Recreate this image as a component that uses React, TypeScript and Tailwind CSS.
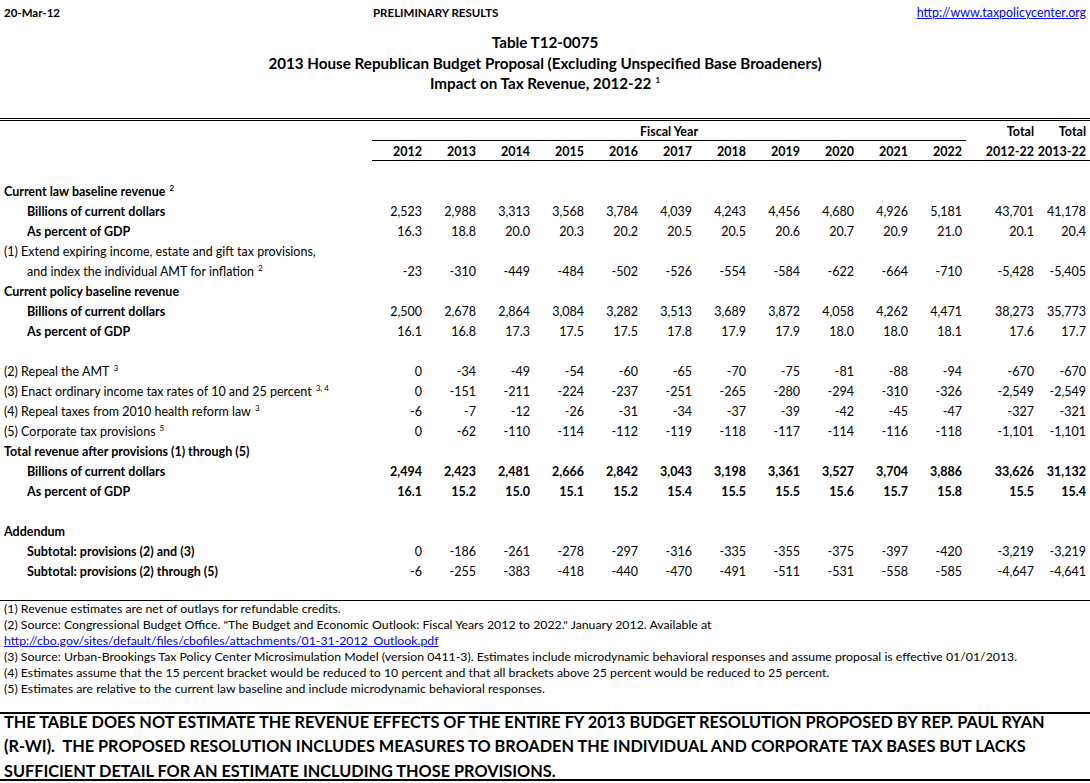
import type { ReactNode } from 'react';

const YEARS = ['2012', '2013', '2014', '2015', '2016', '2017', '2018', '2019', '2020', '2021', '2022'];

type DataRow = {
  label: string;
  sup?: string;
  indent?: boolean;
  bold?: boolean;
  boldValues?: boolean;
  values?: string[];
};

type Row = DataRow | 'gap';

const ROWS: Row[] = [
  { label: 'Current law baseline revenue', sup: '2', bold: true },
  {
    label: 'Billions of current dollars',
    indent: true,
    bold: true,
    values: ['2,523', '2,988', '3,313', '3,568', '3,784', '4,039', '4,243', '4,456', '4,680', '4,926', '5,181', '43,701', '41,178'],
  },
  {
    label: 'As percent of GDP',
    indent: true,
    bold: true,
    values: ['16.3', '18.8', '20.0', '20.3', '20.2', '20.5', '20.5', '20.6', '20.7', '20.9', '21.0', '20.1', '20.4'],
  },
  { label: '(1) Extend expiring income, estate and gift tax provisions,' },
  {
    label: 'and index the individual AMT for inflation',
    sup: '2',
    indent: true,
    values: ['-23', '-310', '-449', '-484', '-502', '-526', '-554', '-584', '-622', '-664', '-710', '-5,428', '-5,405'],
  },
  { label: 'Current policy baseline revenue', bold: true },
  {
    label: 'Billions of current dollars',
    indent: true,
    bold: true,
    values: ['2,500', '2,678', '2,864', '3,084', '3,282', '3,513', '3,689', '3,872', '4,058', '4,262', '4,471', '38,273', '35,773'],
  },
  {
    label: 'As percent of GDP',
    indent: true,
    bold: true,
    values: ['16.1', '16.8', '17.3', '17.5', '17.5', '17.8', '17.9', '17.9', '18.0', '18.0', '18.1', '17.6', '17.7'],
  },
  'gap',
  {
    label: '(2) Repeal the AMT',
    sup: '3',
    values: ['0', '-34', '-49', '-54', '-60', '-65', '-70', '-75', '-81', '-88', '-94', '-670', '-670'],
  },
  {
    label: '(3) Enact ordinary income tax rates of 10 and 25 percent',
    sup: '3, 4',
    values: ['0', '-151', '-211', '-224', '-237', '-251', '-265', '-280', '-294', '-310', '-326', '-2,549', '-2,549'],
  },
  {
    label: '(4) Repeal taxes from 2010 health reform law',
    sup: '3',
    values: ['-6', '-7', '-12', '-26', '-31', '-34', '-37', '-39', '-42', '-45', '-47', '-327', '-321'],
  },
  {
    label: '(5) Corporate tax provisions',
    sup: '5',
    values: ['0', '-62', '-110', '-114', '-112', '-119', '-118', '-117', '-114', '-116', '-118', '-1,101', '-1,101'],
  },
  { label: 'Total revenue after provisions (1) through (5)', bold: true },
  {
    label: 'Billions of current dollars',
    indent: true,
    bold: true,
    boldValues: true,
    values: ['2,494', '2,423', '2,481', '2,666', '2,842', '3,043', '3,198', '3,361', '3,527', '3,704', '3,886', '33,626', '31,132'],
  },
  {
    label: 'As percent of GDP',
    indent: true,
    bold: true,
    boldValues: true,
    values: ['16.1', '15.2', '15.0', '15.1', '15.2', '15.4', '15.5', '15.5', '15.6', '15.7', '15.8', '15.5', '15.4'],
  },
  'gap',
  { label: 'Addendum', bold: true },
  {
    label: 'Subtotal: provisions (2) and (3)',
    indent: true,
    bold: true,
    values: ['0', '-186', '-261', '-278', '-297', '-316', '-335', '-355', '-375', '-397', '-420', '-3,219', '-3,219'],
  },
  {
    label: 'Subtotal: provisions (2) through (5)',
    indent: true,
    bold: true,
    values: ['-6', '-255', '-383', '-418', '-440', '-470', '-491', '-511', '-531', '-558', '-585', '-4,647', '-4,641'],
  },
];

const GRID = 'grid grid-cols-[372px_repeat(11,54px)_72px_52px]';

function Sup({ children }: { children: ReactNode }) {
  return <span className="ml-[4px] align-super text-[8px] leading-none">{children}</span>;
}

function TableRow({ row }: { row: DataRow }) {
  return (
    <div className={`${GRID} h-[20px] items-center`}>
      <div className={`whitespace-nowrap ${row.indent ? 'pl-[27px]' : 'pl-[4px]'} ${row.bold ? 'font-bold' : ''}`}>
        {row.label}
        {row.sup && <Sup>{row.sup}</Sup>}
      </div>
      {row.values?.map((v, i) => (
        <div key={i} className={`flex justify-end whitespace-nowrap pr-[4px] tabular-nums ${row.boldValues ? 'font-bold' : ''}`}>
          {v}
        </div>
      ))}
    </div>
  );
}

const FOOTNOTES = [
  '(1) Revenue estimates are net of outlays for refundable credits.',
  '(2) Source: Congressional Budget Office. "The Budget and Economic Outlook: Fiscal Years 2012 to 2022." January 2012. Available at',
  null,
  '(3) Source: Urban-Brookings Tax Policy Center Microsimulation Model (version 0411-3). Estimates include microdynamic behavioral responses and assume proposal is effective 01/01/2013.',
  '(4) Estimates assume that the 15 percent bracket would be reduced to 10 percent and that all brackets above 25 percent would be reduced to 25 percent.',
  '(5) Estimates are relative to the current law baseline and include microdynamic behavioral responses.',
];

export default function App() {
  return (
    <div className="h-[783px] w-[1090px] overflow-hidden bg-white font-['Lato','Liberation_Sans',sans-serif] text-[12.5px] text-black">
      {/* page header */}
      <div className="flex h-[26px] items-center text-[11.5px]">
        <div className="w-[373px] pl-[4px] font-bold">20-Mar-12</div>
        <div className="font-bold">PRELIMINARY RESULTS</div>
        <a href="#" className="ml-auto pr-[4px] text-[12.4px] text-[#0000ff] underline">
          http://www.taxpolicycenter.org
        </a>
      </div>

      <div className="mt-[6px] text-center text-[15.2px] font-bold leading-[20.5px]">
        <div>Table T12-0075</div>
        <div>2013 House Republican Budget Proposal (Excluding Unspecified Base Broadeners)</div>
        <div>
          Impact on Tax Revenue, 2012-22
          <Sup>1</Sup>
        </div>
      </div>

      <div className="mt-[24px] border-t-[3px] border-double border-black" />

      {/* column headers */}
      <div className={`${GRID} h-[20px] font-bold`}>
        <div />
        <div className="col-span-11 border-b border-black pt-[2px] text-center leading-[17px]">Fiscal Year</div>
        <div className="flex justify-end pr-[4px] pt-[2px] leading-[17px]">Total</div>
        <div className="flex justify-end pr-[4px] pt-[2px] leading-[17px]">Total</div>
      </div>
      <div className={`${GRID} h-[20px] font-bold`}>
        <div />
        {[...YEARS, '2012-22', '2013-22'].map((y) => (
          <div key={y} className="flex justify-end whitespace-nowrap border-b border-black pr-[4px] pt-[2px] leading-[17px]">
            {y}
          </div>
        ))}
      </div>

      <div className="h-[22px]" />

      {ROWS.map((row, i) => (row === 'gap' ? <div key={i} className="h-[20px]" /> : <TableRow key={i} row={row} />))}

      <div className="h-[17px]" />

      {/* footnotes */}
      <div className="border-t border-black text-[12.3px] leading-[16px]">
        {FOOTNOTES.map((f, i) =>
          f === null ? (
            <div key={i} className="pl-[4px]">
              <a href="#" className="text-[#0000ff] underline">
                http://cbo.gov/sites/default/files/cbofiles/attachments/01-31-2012_Outlook.pdf
              </a>
            </div>
          ) : (
            <div key={i} className="whitespace-nowrap pl-[4px]">
              {f}
            </div>
          ),
        )}
      </div>

      <div className="h-[15px]" />

      <div className="flex flex-col gap-[8.5px] border-y-2 border-black pl-[4px] text-[16.3px] font-bold leading-[16px]">
        <div className="whitespace-pre">THE TABLE DOES NOT ESTIMATE THE REVENUE EFFECTS OF THE ENTIRE FY 2013 BUDGET RESOLUTION PROPOSED BY REP. PAUL RYAN</div>
        <div className="whitespace-pre">(R-WI).  THE PROPOSED RESOLUTION INCLUDES MEASURES TO BROADEN THE INDIVIDUAL AND CORPORATE TAX BASES BUT LACKS</div>
        <div className="whitespace-pre">SUFFICIENT DETAIL FOR AN ESTIMATE INCLUDING THOSE PROVISIONS.</div>
      </div>
    </div>
  );
}
